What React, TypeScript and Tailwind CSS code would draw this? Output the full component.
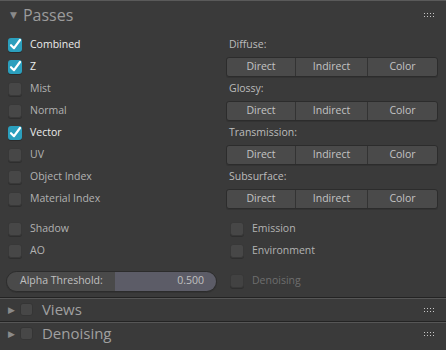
import React from "react";

const font = { fontFamily: '"Open Sans", "DejaVu Sans", sans-serif' };

function Check({ on, dim }: { on?: boolean; dim?: boolean }) {
  if (on)
    return (
      <span className="flex h-[14px] w-[14px] items-center justify-center rounded-[3px] bg-[#2b9fbd] shadow-[0_1px_0_#2a2a2a]">
        <svg viewBox="0 0 14 14" className="h-[14px] w-[14px]">
          <path d="M3 7.2 L6 10.2 L12 2" fill="none" stroke="#ffffff" strokeWidth="2.2" strokeLinecap="round" strokeLinejoin="round" />
        </svg>
      </span>
    );
  return (
    <span
      className={`block h-[14px] w-[14px] rounded-[3px] border border-[#383838] ${
        dim ? "bg-[#424242]" : "bg-[#474747]"
      } shadow-[0_1px_0_#2e2e2e]`}
    />
  );
}

function CheckRow({ label, on, dim }: { label: string; on?: boolean; dim?: boolean }) {
  return (
    <div className="flex h-[22px] items-center gap-[8px]">
      <Check on={on} dim={dim} />
      <span className={`text-[10.5px] ${on ? "text-[#ececec]" : dim ? "text-[#6e6e6e]" : "text-[#b2b2b2]"}`}>{label}</span>
    </div>
  );
}

function Grip() {
  return (
    <div className="grid grid-cols-4 gap-x-[2px] gap-y-[2px]">
      {Array.from({ length: 8 }).map((_, i) => (
        <span key={i} className="block h-[1px] w-[1px] bg-[#c8c8c8]" />
      ))}
    </div>
  );
}

function ButtonRow() {
  return (
    <div className="flex h-[22px] items-center">
      <div className="flex h-[20px] w-full overflow-hidden rounded-[3px] border border-[#2c2c2c] bg-[#4a4a4a] text-[10.5px] text-[#c4c4c4] shadow-[0_1px_0_#333]">
        <span className="flex w-[69px] items-center justify-center border-r border-[#333]">Direct</span>
        <span className="flex w-[72px] items-center justify-center border-r border-[#333]">Indirect</span>
        <span className="flex flex-1 items-center justify-center">Color</span>
      </div>
    </div>
  );
}

function Label({ text }: { text: string }) {
  return <div className="flex h-[22px] items-center pl-[3px] text-[10.5px] text-[#bcbcbc]">{text}</div>;
}

function SubHeader({ title }: { title: string }) {
  return (
    <div className="flex h-[24px] items-center border-t border-[#232323] pl-[8px] pr-[12px] shadow-[inset_0_1px_0_#565656]">
      <span className="text-[9px] text-[#8a8a8a]">▶</span>
      <span className="ml-[5px] block h-[13px] w-[13px] rounded-[3px] border border-[#353535] bg-[#474747]" />
      <span className="ml-[9px] text-[15px] text-[#a0a0a0]">{title}</span>
      <span className="ml-auto">
        <Grip />
      </span>
    </div>
  );
}

export default function App() {
  return (
    <div className="h-[350px] w-[446px] overflow-hidden bg-[#3a3a3a]" style={font}>
      <div className="flex h-[28px] items-center border-t border-[#5a5a5a] pl-[10px] pr-[12px]">
        <span className="text-[9px] text-[#8a8a8a]">▼</span>
        <span className="ml-[6px] text-[16px] text-[#9c9c9c]">Passes</span>
        <span className="ml-auto">
          <Grip />
        </span>
      </div>
      <div className="flex px-[8px] pt-[6px]">
        <div className="w-[218px]">
          <CheckRow label="Combined" on />
          <CheckRow label="Z" on />
          <CheckRow label="Mist" />
          <CheckRow label="Normal" />
          <CheckRow label="Vector" on />
          <CheckRow label="UV" />
          <CheckRow label="Object Index" />
          <CheckRow label="Material Index" />
        </div>
        <div className="flex-1">
          <Label text="Diffuse:" />
          <ButtonRow />
          <Label text="Glossy:" />
          <ButtonRow />
          <Label text="Transmission:" />
          <ButtonRow />
          <Label text="Subsurface:" />
          <ButtonRow />
        </div>
      </div>
      <div className="flex px-[8px] pt-[8px]">
        <div className="w-[222px]">
          <CheckRow label="Shadow" />
          <CheckRow label="AO" />
        </div>
        <div className="flex-1">
          <CheckRow label="Emission" />
          <CheckRow label="Environment" />
        </div>
      </div>
      <div className="flex items-center px-[6px] pt-[8px] pb-[5px]">
        <div className="flex h-[21px] w-[211px] overflow-hidden rounded-full border border-[#2c2c2c] text-[10.5px] shadow-[0_1px_0_#333]">
          <div className="flex w-[108px] items-center bg-[#4a4a4a] pl-[13px] text-[#c0c0c0]">Alpha Threshold:</div>
          <div className="flex flex-1 items-center justify-end bg-[#5c5c67] pr-[12px] text-[#c0c0c0]">0.500</div>
        </div>
        <div className="ml-[13px]">
          <CheckRow label="Denoising" dim />
        </div>
      </div>
      <SubHeader title="Views" />
      <SubHeader title="Denoising" />
    </div>
  );
}
